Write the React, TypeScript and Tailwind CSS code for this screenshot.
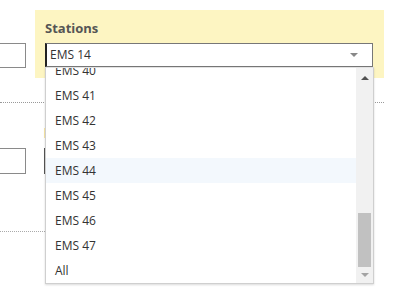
import React from "react";

const items = ["EMS 40", "EMS 41", "EMS 42", "EMS 43", "EMS 44", "EMS 45", "EMS 46", "EMS 47", "All"];

export default function App() {
  return (
    <div
      className="relative w-[393px] h-[298px] overflow-hidden bg-white text-[#333]"
      style={{ fontFamily: '"Open Sans", "Liberation Sans", sans-serif' }}
    >
      {/* Row 1 */}
      <div className="flex pt-[10px]">
        <div className="w-[35px] pt-[33px]">
          <div className="w-[26px] h-[25px] border border-l-0 border-[#8a8a8a]" />
        </div>
        <div className="w-[349px] h-[68px] bg-[#fdf5c2] pl-[10px] pt-[9px]">
          <div className="text-[13px] leading-[18px] font-bold text-[#555]">Stations</div>
          <div className="mt-[6px] flex items-center w-[328px] h-[24px] border border-[#777] border-l-2 border-l-[#222] bg-white pl-[3px]">
            <span className="text-[12px] leading-[16px]">EMS 14</span>
            <span className="ml-auto mr-[14px] w-0 h-0 border-l-[4px] border-r-[4px] border-t-[4px] border-l-transparent border-r-transparent border-t-[#888]" />
          </div>
        </div>
      </div>

      {/* dotted divider 1 */}
      <div className="mt-[24px] w-[384px] border-t border-dotted border-[#999]" />

      {/* Row 2 */}
      <div className="flex">
        <div className="w-[44px] pt-[45px]">
          <div className="w-[26px] h-[26px] border border-l-0 border-[#8a8a8a]" />
        </div>
        <div className="flex flex-col">
          <div className="mt-[25px] w-[2px] h-[10px] bg-[#fbe9a8]" />
          <div className="mt-[10px] w-[2px] h-[26px] bg-[#555]" />
        </div>
      </div>

      {/* dotted divider 2 */}
      <div className="mt-[57px] w-[45px] border-t border-dotted border-[#aaa]" />

      {/* Dropdown list */}
      <div className="absolute left-[45px] top-[67px] w-[329px] h-[217px] flex border border-[#cfcfcf] border-t-[#e2e2e2] bg-white shadow-[0_1px_2px_rgba(0,0,0,0.15)]">
        <div className="flex-1 overflow-hidden">
          <div className="-mt-[10px]">
            {items.map((it) => (
              <div
                key={it}
                className={`h-[25px] flex items-center pl-[9px] text-[12px] ${it === "EMS 44" ? "bg-[#f3f8fd]" : ""}`}
              >
                {it}
              </div>
            ))}
          </div>
        </div>
        <div className="w-[17px] h-full bg-[#f1f1f1] flex flex-col items-center">
          <div className="mt-[8px] w-0 h-0 border-l-[4px] border-r-[4px] border-b-[4px] border-l-transparent border-r-transparent border-b-[#505050]" />
          <div className="mt-[133px] w-[13px] h-[54px] bg-[#c1c1c1]" />
          <div className="mt-[6px] w-0 h-0 border-l-[4px] border-r-[4px] border-t-[4px] border-l-transparent border-r-transparent border-t-[#a3a3a3]" />
        </div>
      </div>
    </div>
  );
}
